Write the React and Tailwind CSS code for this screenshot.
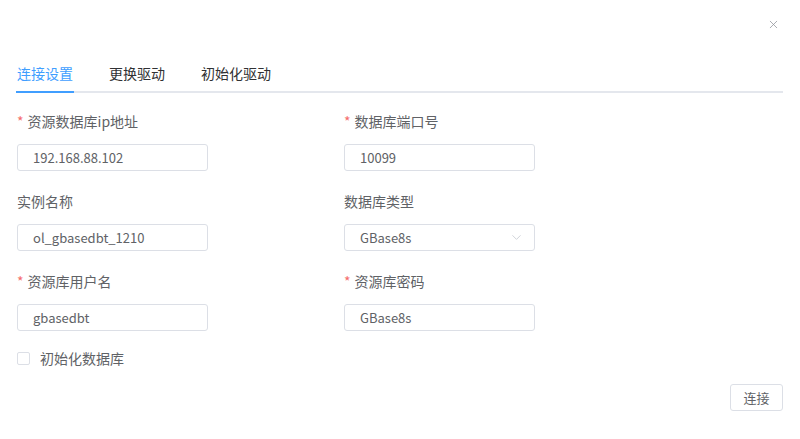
import { ChevronDown, X } from "lucide-react";

const font = { fontFamily: '"Noto Sans CJK SC", "Liberation Sans", sans-serif' };

function Label({ required, children }) {
  return (
    <div className="h-[20px] flex items-center text-[14px] text-[#606266]">
      {required && <span className="text-[#f56c6c] mr-[4px]">*</span>}
      {children}
    </div>
  );
}

function Field({ label, required, value, select }) {
  return (
    <div className="w-[191px]">
      <Label required={required}>{label}</Label>
      <div className="mt-[13px] h-[27px] border border-[#dcdfe6] rounded-[3px] flex items-center pl-[15px] pr-[10px] text-[13px] text-[#606266]">
        <span className="flex-1">{value}</span>
        {select && <ChevronDown size={15} strokeWidth={1.2} className="text-[#c0c4cc]" />}
      </div>
    </div>
  );
}

export default function App() {
  return (
    <div className="w-[800px] h-[439px] bg-white relative" style={font}>
      <button className="absolute right-[20px] top-[18px] text-[#909399]">
        <X size={13} strokeWidth={1.4} />
      </button>
      <div className="pt-[63px] px-[16px]">
        <div className="w-[767px] border-b-2 border-[#e4e7ed] flex gap-[36px] text-[14px] h-[30px]">
          <div className="relative text-[#409eff] pl-[1px]">
            连接设置
            <div className="absolute left-0 right-[-1px] bottom-[-2px] h-[2px] bg-[#409eff]" />
          </div>
          <div className="text-[#303133]">更换驱动</div>
          <div className="text-[#303133]">初始化驱动</div>
        </div>
        <div className="pl-[1px] pt-[18px] grid grid-cols-[327px_191px] gap-y-[20px]">
          <Field required label="资源数据库ip地址" value="192.168.88.102" />
          <Field required label="数据库端口号" value="10099" />
          <Field label="实例名称" value="ol_gbasedbt_1210" />
          <Field label="数据库类型" value="GBase8s" select />
          <Field required label="资源库用户名" value="gbasedbt" />
          <Field required label="资源库密码" value="GBase8s" />
        </div>
        <div className="pl-[1px] mt-[17px] flex items-center gap-[10px] text-[14px] text-[#606266]">
          <span className="w-[13px] h-[13px] border border-[#dcdfe6] rounded-[2px] bg-white" />
          初始化数据库
        </div>
        <div className="flex justify-end mt-[15px] w-[767px]">
          <button className="w-[53px] h-[27px] border border-[#dcdfe6] rounded-[3px] text-[13px] text-[#606266]">
            连接
          </button>
        </div>
      </div>
    </div>
  );
}
